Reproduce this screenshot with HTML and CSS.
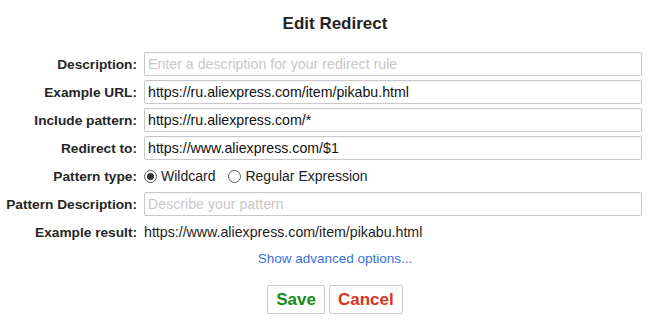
FILE: index.html
```html
<!DOCTYPE html>
<html>
<head>
<meta charset="utf-8">
<link rel="stylesheet" href="styles.css">
</head>
<body>
<div class="page">
  <h1 class="title">Edit Redirect</h1>
  <div class="form">
    <label class="lbl">Description:</label>
    <input class="field" type="text" placeholder="Enter a description for your redirect rule">
    <label class="lbl">Example URL:</label>
    <input class="field" type="text" value="https://ru.aliexpress.com/item/pikabu.html">
    <label class="lbl">Include pattern:</label>
    <input class="field" type="text" value="https://ru.aliexpress.com/*">
    <label class="lbl">Redirect to:</label>
    <input class="field" type="text" value="https://www.aliexpress.com/$1">
    <label class="lbl">Pattern type:</label>
    <div class="radios">
      <span class="radio-opt"><span class="radio checked"></span>Wildcard</span>
      <span class="radio-opt"><span class="radio"></span>Regular Expression</span>
    </div>
    <label class="lbl">Pattern Description:</label>
    <input class="field" type="text" placeholder="Describe your pattern">
    <label class="lbl">Example result:</label>
    <div class="result">https://www.aliexpress.com/item/pikabu.html</div>
  </div>
  <div class="advanced"><a class="link" href="#">Show advanced options...</a></div>
  <div class="buttons">
    <button class="btn save">Save</button>
    <button class="btn cancel">Cancel</button>
  </div>
</div>
</body>
</html>
```

FILE: styles.css
```css
html, body {
  margin: 0;
  padding: 0;
  background: #fff;
}
body {
  font-family: "Liberation Sans", Arial, sans-serif;
  color: #333;
}
.page {
  width: 650px;
}
.title {
  margin: 14px 0 18px 20px;
  font-size: 17px;
  line-height: 20px;
  font-weight: bold;
  text-align: center;
  color: #222;
}
.form {
  display: grid;
  grid-template-columns: 137px 498px;
  column-gap: 7px;
  row-gap: 4px;
  grid-auto-rows: 24px;
  align-items: center;
}
.lbl {
  text-align: right;
  font-weight: bold;
  font-size: 13.7px;
  color: #262626;
  white-space: nowrap;
}
.field {
  box-sizing: border-box;
  height: 24px;
  width: 498px;
  margin: 0;
  border: 1px solid #c9c9c9;
  border-radius: 2px;
  padding: 0 3px;
  font-family: "Liberation Sans", Arial, sans-serif;
  font-size: 14.2px;
  color: #111;
  background: #fff;
  box-shadow: inset 0 1px 1px rgba(0,0,0,0.04);
  outline: none;
}
.field::placeholder {
  color: #c8c8c8;
}
.radios {
  display: flex;
  align-items: center;
  gap: 13px;
  font-size: 14px;
  color: #222;
}
.radio-opt {
  display: flex;
  align-items: center;
  gap: 4px;
}
.radio {
  box-sizing: border-box;
  width: 13px;
  height: 13px;
  border: 1px solid #555;
  border-radius: 50%;
  background: #fff;
  display: flex;
  align-items: center;
  justify-content: center;
}
.radio.checked::after {
  content: "";
  width: 7px;
  height: 7px;
  border-radius: 50%;
  background: #333;
}
.result {
  font-size: 14.2px;
  color: #222;
}
.advanced {
  margin: 2px 0 0 20px;
  height: 24px;
  line-height: 24px;
  text-align: center;
}
.link {
  color: #3b6fdc;
  font-size: 13.5px;
  text-decoration: none;
}
.buttons {
  margin: 15px 0 0 20px;
  display: flex;
  justify-content: center;
  gap: 4px;
}
.btn {
  box-sizing: border-box;
  height: 29px;
  padding: 0 8px;
  border: 1px solid #cbcbcb;
  border-radius: 2px;
  background: #fff;
  font-family: "Liberation Sans", Arial, sans-serif;
  font-size: 17px;
  font-weight: bold;
  box-shadow: 0 1px 1px rgba(0,0,0,0.06);
}
.save {
  color: #178a17;
}
.cancel {
  color: #d9341f;
}
```
